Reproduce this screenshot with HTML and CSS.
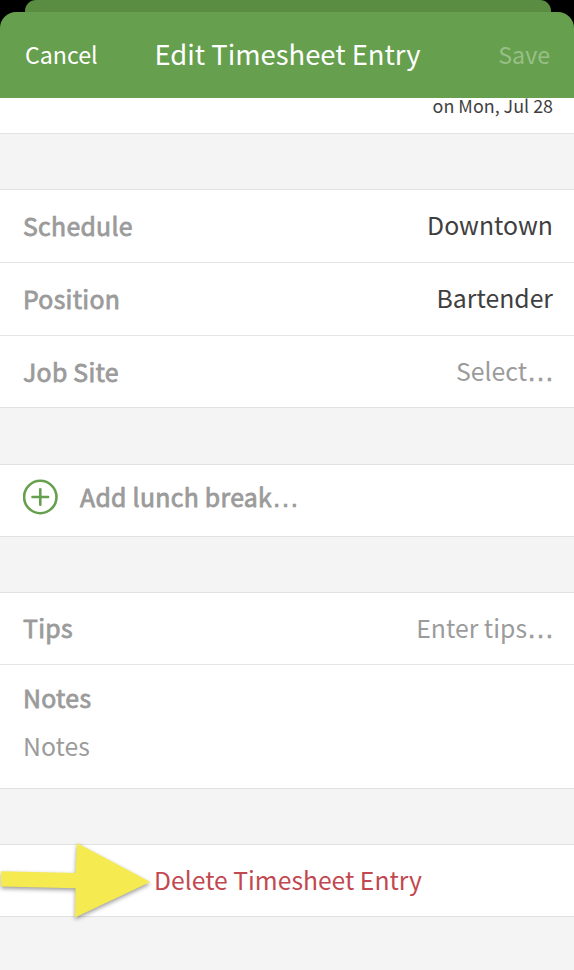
FILE: index.html
```html
<!DOCTYPE html>
<html lang="en">
<head>
<meta charset="utf-8">
<title>Edit Timesheet Entry</title>
<link rel="stylesheet" href="styles.css">
</head>
<body>
<div class="backdrop"><div class="sheet-behind"></div></div>
<div class="header-wrap">
  <header class="header">
    <span class="cancel">Cancel</span>
    <h1 class="title">Edit Timesheet Entry</h1>
    <span class="save">Save</span>
  </header>
</div>
<main>
  <section class="date"><span class="date-text">on Mon, Jul 28</span></section>
  <section class="group details">
    <div class="row"><span class="label">Schedule</span><span class="value">Downtown</span></div>
    <div class="row"><span class="label">Position</span><span class="value">Bartender</span></div>
    <div class="row job"><span class="label">Job Site</span><span class="value muted">Select<span class="dots">…</span></span></div>
  </section>
  <section class="group">
    <div class="row add">
      <svg class="plus" width="36" height="36" viewBox="0 0 36 36" fill="none" stroke="#669f4d" stroke-width="2.6" stroke-linecap="round"><circle cx="17.3" cy="18" r="16.2"/><path d="M9.5 18h15.6M17.3 10.2v15.6"/></svg>
      <span class="label">Add lunch break<span class="dots">…</span></span>
    </div>
  </section>
  <section class="group">
    <div class="row tips"><span class="label">Tips</span><span class="value muted">Enter tips<span class="dots">…</span></span></div>
    <div class="notes"><span class="label">Notes</span><span class="muted">Notes</span></div>
  </section>
  <section class="group">
    <div class="row delete">
      <span class="danger">Delete Timesheet Entry</span>
      <svg class="arrow" width="160" height="90" viewBox="0 0 160 90"><path d="M1 36.2L75.5 38L77 8L150.3 47L75 82.5L75.5 53.2L1 51.5Z" fill="#f5ea4f"/></svg>
    </div>
  </section>
</main>
</body>
</html>
```
FILE: styles.css
```css
* { box-sizing: border-box; }
body {
  margin: 0;
  height: 970px;
  overflow: hidden;
  background: #f4f4f4;
  font-family: "Noto Sans CJK SC", "Noto Sans", sans-serif;
  font-size: 24.8px;
  line-height: 36px;
  color: #3f3f3f;
  white-space: nowrap;
}
.backdrop { height: 12px; padding: 0 23px 0 25px; background: #000; }
.sheet-behind { height: 12px; background: #5a8c42; border-radius: 11px 11px 0 0; }
.header-wrap { background: #000; }
.header {
  display: grid;
  grid-template-columns: 1fr auto 1fr;
  align-items: center;
  height: 86px;
  padding: 0 24px 5px 25px;
  border-radius: 16px 16px 0 0;
  background: #669f4d;
  color: #fff;
}
.title { margin: 0; font-size: 27.4px; font-weight: 400; }
.cancel, .save { padding-top: 3px; font-size: 23.2px; }
.save { text-align: right; color: #98bf86; }
.date {
  display: flex;
  justify-content: flex-end;
  height: 36px;
  padding: 0 21px;
  background: #fff;
  border-bottom: 1px solid #e4e4e4;
}
.date-text { font-size: 17.9px; line-height: 14px; }
.group {
  margin-top: 55px;
  background: #fff;
  border: solid #e1e1e1;
  border-width: 1px 0;
}
.details { margin-bottom: 56px; }
.details + .group { margin-top: 0; }
.row {
  position: relative;
  display: flex;
  align-items: center;
  justify-content: space-between;
  height: 73px;
  padding: 0 21px 3px 23px;
  border-bottom: 1px solid #e4e4e4;
}
.row:last-child { height: 71px; border-bottom: 0; }
.row .value { padding-bottom: 2px; }
.details .job { padding-bottom: 2px; }
.details .job .value { padding-bottom: 1px; }
.row.tips { height: 72px; padding-bottom: 3px; }
.row.tips .value { padding-bottom: 0; }
.label {
  color: #9b9b9b;
  letter-spacing: .3px;
  -webkit-text-stroke: .8px #9b9b9b;
}
.muted { color: #9b9b9b; }
.dots {
  margin: 0 -1.5px 0 -.5px;
  font-family: "Liberation Sans", sans-serif;
  font-size: 28px;
  line-height: 0;
  letter-spacing: 0;
  -webkit-text-stroke: .5px #9b9b9b;
}
.row.add { justify-content: flex-start; gap: 21px; padding-bottom: 7px; }
.row.add .label { padding-bottom: 2px; }
.notes { display: flex; flex-direction: column; gap: 12px; height: 123px; padding: 14px 23px; }
.delete { justify-content: center; }
.danger { font-size: 24.7px; color: #c2484f; }
.arrow { position: absolute; left: 0; top: -10px; filter: drop-shadow(0 2px 2px rgba(0,0,0,.4)); }
```
